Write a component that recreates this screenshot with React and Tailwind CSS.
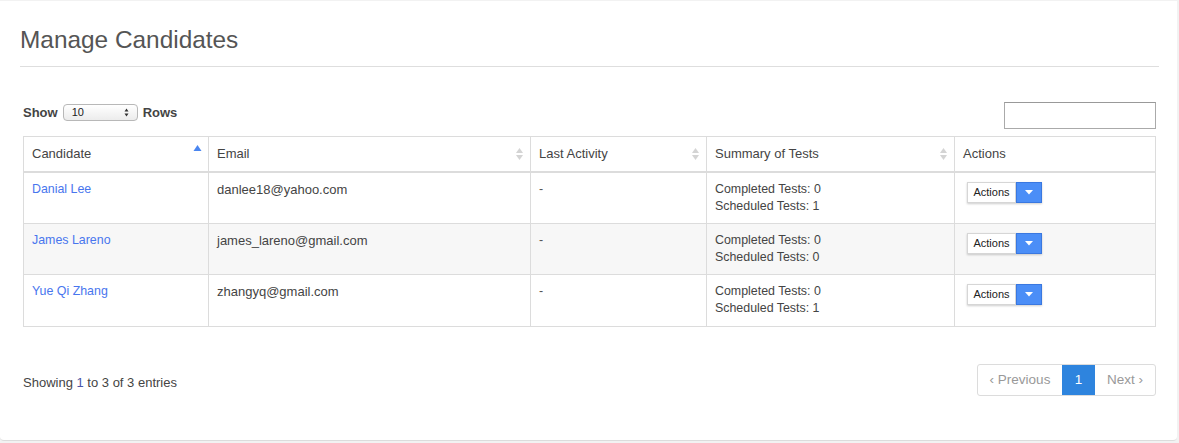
import React from "react";

const candidates = [
    { name: "Danial Lee", email: "danlee18@yahoo.com", last: "-", completed: 0, scheduled: 1 },
    { name: "James Lareno", email: "james_lareno@gmail.com", last: "-", completed: 0, scheduled: 0 },
    { name: "Yue Qi Zhang", email: "zhangyq@gmail.com", last: "-", completed: 0, scheduled: 1 },
];

const SortBoth = () => (
    <svg width="9" height="14" viewBox="0 0 9 14" className="shrink-0">
        <path d="M4.5 1 L8 6 L1 6 Z" fill="#d4d4d4" />
        <path d="M4.5 13 L8 8 L1 8 Z" fill="#d4d4d4" />
    </svg>
);

const SortUp = () => (
    <svg width="9" height="14" viewBox="0 0 9 14" className="shrink-0">
        <path d="M4.5 1 L8.5 7 L0.5 7 Z" fill="#4a86f0" />
    </svg>
);

const ActionsButton = () => (
    <div className="flex h-[21px] w-[75px] shadow-[0_1px_2px_rgba(0,0,0,0.2)]">
        <div className="flex flex-1 items-center justify-center border border-[#d6d6d6] bg-white text-[11px] text-[#222]">Actions</div>
        <div className="flex w-[26px] items-center justify-center border border-[#3a78e0] bg-[#4b8ef7]">
            <svg width="8" height="5" viewBox="0 0 8 5"><path d="M0 0 L8 0 L4 4.5 Z" fill="#fff" /></svg>
        </div>
    </div>
);

export default function App() {
    const columns = [
        { title: "Candidate", w: "w-[185px]", sort: <SortUp /> },
        { title: "Email", w: "w-[322px]", sort: <SortBoth /> },
        { title: "Last Activity", w: "w-[176px]", sort: <SortBoth /> },
        { title: "Summary of Tests", w: "w-[248px]", sort: <SortBoth /> },
        { title: "Actions", w: "w-[200px]", sort: null },
    ];

    return (
        <div className="h-[443px] w-[1179px] bg-[#f2f2f2] pt-px font-['Liberation_Sans',Arial,sans-serif] text-[13px] text-[#444]">
            <div className="h-[440px] w-[1177px] rounded-b-sm border-b border-[#dcdcdc] bg-white">
                {/* Title */}
                <div className="px-5 pt-[26px]">
                    <h1 className="text-[24.4px] leading-[26px] text-[#555]">Manage Candidates</h1>
                    <div className="mt-[13px] h-px w-[1139px] bg-[#dedede]" />
                </div>

                <div className="w-[1179px] pl-[23px]">
                    {/* Show rows + search */}
                    <div className="mt-[34px] flex h-[28px] w-[1133px] items-center justify-between">
                        <div className="-mt-[5px] flex items-center gap-[5px] font-bold text-[13px] text-[#444]">
                            <span>Show</span>
                            <div className="flex h-[17px] w-[75px] items-center justify-between rounded-[4px] border border-[#b8b8b8] bg-gradient-to-b from-white to-[#ececec] px-[8px] text-[11px] font-normal text-[#222]">
                                <span>10</span>
                                <svg width="5" height="9" viewBox="0 0 5 9"><path d="M2.5 0.5 L4.5 3.5 L0.5 3.5 Z M2.5 8.5 L4.5 5.5 L0.5 5.5 Z" fill="#333" /></svg>
                            </div>
                            <span>Rows</span>
                        </div>
                        <div className="h-[27px] w-[152px] border border-[#aaa] border-t-[#999] bg-white" />
                    </div>

                    {/* Table */}
                    <div className="mt-[7px] w-[1133px] border border-[#dcdcdc]">
                        <div className="flex h-[36px] border-b-2 border-[#dcdcdc]">
                            {columns.map((c, i) => (
                                <div key={c.title} className={`${c.w} flex shrink-0 items-center justify-between pl-[8px] pr-[6px] text-[13px] text-[#444] ${i < 4 ? "border-r border-[#dcdcdc]" : ""}`}>
                                    <span>{c.title}</span>
                                    {c.sort && <div className={i === 0 ? "-mt-[7px]" : ""}>{c.sort}</div>}
                                </div>
                            ))}
                        </div>
                        {candidates.map((c, r) => (
                            <div key={c.name} className={`flex h-[51px] text-[12.4px] leading-[17px] ${r % 2 === 1 ? "bg-[#f7f7f7]" : "bg-white"} ${r < 2 ? "border-b border-[#dcdcdc]" : ""}`}>
                                <div className="w-[185px] shrink-0 border-r border-[#dcdcdc] pl-[8px] pt-[8px] text-[#4876ee]">{c.name}</div>
                                <div className="w-[322px] shrink-0 border-r border-[#dcdcdc] pl-[8px] pt-[8px] text-[13px] text-[#444]">{c.email}</div>
                                <div className="w-[176px] shrink-0 border-r border-[#dcdcdc] pl-[8px] pt-[8px] text-[#555]">{c.last}</div>
                                <div className="w-[248px] shrink-0 border-r border-[#dcdcdc] pl-[8px] pt-[8px] text-[#444]">
                                    <div>Completed Tests: {c.completed}</div>
                                    <div>Scheduled Tests: {c.scheduled}</div>
                                </div>
                                <div className="w-[200px] shrink-0 pl-[12px] pt-[9px]">
                                    <ActionsButton />
                                </div>
                            </div>
                        ))}
                    </div>

                    {/* Footer */}
                    <div className="mt-[37px] flex w-[1133px] items-center justify-between">
                        <div className="pt-[5px] text-[13px] text-[#444]">
                            Showing <span className="text-[#4a56a8]">1</span> to 3 of 3 entries
                        </div>
                        <div className="flex h-[32px] overflow-hidden rounded-[3px] border border-[#dcdcdc] text-[13.5px]">
                            <div className="flex w-[84px] items-center justify-center text-[#999]">‹ Previous</div>
                            <div className="flex w-[33px] items-center justify-center bg-[#2e84de] text-white">1</div>
                            <div className="flex w-[60px] items-center justify-center text-[#999]">Next ›</div>
                        </div>
                    </div>
                </div>
            </div>
        </div>
    );
}
